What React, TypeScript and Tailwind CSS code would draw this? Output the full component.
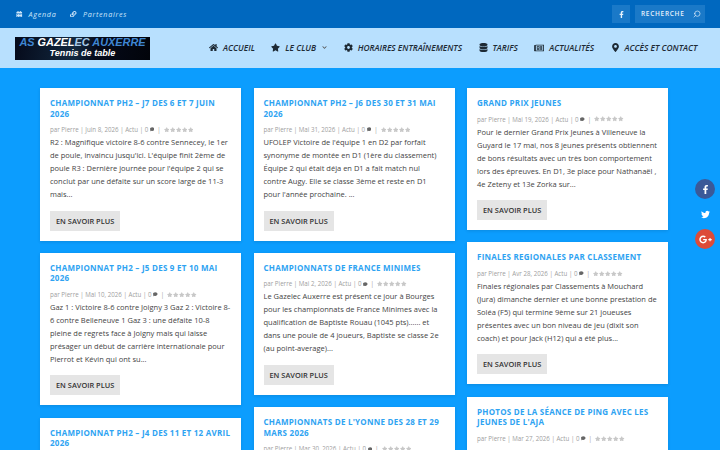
import { FaCalendarAlt, FaLink, FaFacebookF, FaHome, FaStar, FaCog, FaDatabase, FaRegNewspaper, FaMapMarkerAlt, FaComment, FaTwitter, FaGooglePlusG, FaChevronDown } from 'react-icons/fa';
import { FiSearch } from 'react-icons/fi';

type Post = {
  title: string;
  date?: string;
  text?: string;
};

const columns: Post[][] = [
  [
    {
      title: 'Championnat PH2 – J7 des 6 et 7 juin 2026',
      date: 'Juin 8, 2026',
      text: "R2 : Magnifique victoire 8-6 contre Sennecey, le 1er de poule, invaincu jusqu'ici. L'équipe finit 2ème de poule R3 : Dernière journée pour l'équipe 2 qui se conclut par une défaite sur un score large de 11-3 mais...",
    },
    {
      title: 'Championnat PH2 – J5 des 9 et 10 mai 2026',
      date: 'Mai 10, 2026',
      text: 'Gaz 1 : Victoire 8-6 contre Joigny 3 Gaz 2 : Victoire 8-6 contre Belleneuve 1 Gaz 3 : une défaite 10-8 pleine de regrets face à Joigny mais qui laisse présager un début de carrière internationale pour Pierrot et Kévin qui ont su...',
    },
    { title: 'Championnat PH2 – J4 des 11 et 12 avril 2026' },
  ],
  [
    {
      title: 'Championnat PH2 – J6 des 30 et 31 mai 2026',
      date: 'Mai 31, 2026',
      text: "UFOLEP Victoire de l'équipe 1 en D2 par forfait synonyme de montée en D1 (1ère du classement) Équipe 2 qui était déja en D1 a fait match nul contre Augy. Elle se classe 3ème et reste en D1 pour l'année prochaine.  ...",
    },
    {
      title: 'Championnats de France Minimes',
      date: 'Mai 2, 2026',
      text: 'Le Gazelec Auxerre est présent ce jour à Bourges pour les championnats de France Minimes avec la qualification de Baptiste Rouau (1045 pts)...... et dans une poule de 4 joueurs, Baptiste se classe 2e (au point-average)...',
    },
    { title: "Championnats de l'Yonne des 28 et 29 mars 2026", date: 'Mar 30, 2026' },
  ],
  [
    {
      title: 'Grand Prix Jeunes',
      date: 'Mai 19, 2026',
      text: 'Pour le dernier Grand Prix Jeunes à Villeneuve la Guyard le 17 mai, nos 8 jeunes présents obtiennent de bons résultats avec un très bon comportement lors des épreuves. En D1, 3e place pour Nathanaël , 4e Zeteny et 13e Zorka sur...',
    },
    {
      title: 'Finales Regionales par classement',
      date: 'Avr 28, 2026',
      text: 'Finales régionales par Classements à Mouchard (Jura) dimanche dernier et une bonne prestation de Soléa (F5) qui termine 9ème sur 21 joueuses présentes avec un bon niveau de jeu (dixit son coach) et pour Jack (H12) qui a été plus...',
    },
    { title: "Photos de la séance de ping avec les jeunes de l'AJA", date: 'Mar 27, 2026' },
  ],
];

const menu = [
  { label: 'Accueil', icon: <FaHome className="text-[9px]" /> },
  { label: 'Le club', icon: <FaStar className="text-[9px]" />, caret: true },
  { label: 'Horaires entraînements', icon: <FaCog className="text-[9px]" /> },
  { label: 'Tarifs', icon: <FaDatabase className="text-[9px]" /> },
  { label: 'Actualités', icon: <FaRegNewspaper className="text-[10px]" /> },
  { label: 'Accès et contact', icon: <FaMapMarkerAlt className="text-[9px]" /> },
];

function Card({ post }: { post: Post }) {
  return (
    <article className="bg-white p-[10px] shadow-[0_1px_3px_rgba(0,0,0,0.12)]">
      <h2 className="text-[8px] leading-[10.5px] font-bold tracking-[0.25px] text-[#2ea3f2] uppercase">{post.title}</h2>
      {post.date && (
        <div className="mt-[6px] flex items-center gap-[1.5px] text-[6.2px] leading-[9px] whitespace-nowrap text-[#a0a0a0]">
          <span>par Pierre | {post.date} | Actu | 0</span>
          <FaComment className="text-[4.5px] text-[#666]" />
          <span>&nbsp;|&nbsp;</span>
          <span className="flex gap-[0.5px] text-[#c8c8c8]">
            {[0, 1, 2, 3, 4].map((i) => (
              <FaStar key={i} className="text-[5.5px]" />
            ))}
          </span>
        </div>
      )}
      {post.text && (
        <>
          <p className="mt-[2px] text-[7.5px] leading-[13px] text-[#444]">{post.text}</p>
          <a className="mt-[9.5px] inline-block bg-[#e5e5e5] px-[6px] py-[5px] text-[7.4px] leading-[10px] font-semibold text-[#333] uppercase">
            En savoir plus
          </a>
        </>
      )}
    </article>
  );
}

export default function App() {
  return (
    <div className="relative h-[450px] w-[720px] overflow-hidden bg-[#0c9dfe] font-['Open_Sans',sans-serif]">
      <div className="flex h-[28px] items-center justify-between bg-[#0068bf] pr-[15px] pl-[16px]">
        <div className="flex items-center gap-[14px] text-[7.2px] tracking-[0.7px] text-[#cfe6fa] italic">
          <span className="flex items-center gap-[6px]">
            <FaCalendarAlt className="text-[6.5px]" /> Agenda
          </span>
          <span className="flex items-center gap-[6px]">
            <FaLink className="text-[6.5px]" /> Partenaires
          </span>
        </div>
        <div className="flex items-center gap-[5px]">
          <span className="flex h-[18px] w-[18px] items-center justify-center bg-[#1a79c8] text-[7px] text-[#e6f2fc]">
            <FaFacebookF />
          </span>
          <span className="flex h-[18px] w-[70px] items-center justify-between bg-[#1a79c8] pr-[4px] pl-[6px] text-[6.5px] font-semibold tracking-[0.7px] text-[#e6f2fc]">
            RECHERCHE <FiSearch className="-scale-x-100 text-[8px]" />
          </span>
        </div>
      </div>

      <header className="flex h-[40px] items-center bg-[#b8e0fe] pl-[15px]">
        <div className="flex h-[23px] w-[135px] shrink-0 flex-col items-center justify-center bg-[linear-gradient(100deg,#050a1a,#12283f_45%,#050a1a_60%,#02040a)] font-['Liberation_Sans',sans-serif] leading-none font-bold italic">
          <span className="text-[10.9px] leading-[11px] whitespace-nowrap text-[#3f86d2]">
            AS <span className="text-white">GAZEL</span><span className="text-[#a9cbe8]">EC</span> AUXERRE
          </span>
          <span className="text-[9.1px] leading-[11px] text-white">Tennis de table</span>
        </div>
        <nav className="ml-[59px] flex items-center gap-[16.5px] text-[8.4px] font-semibold whitespace-nowrap text-[#1d2a35] uppercase italic">
          {menu.map((item) => (
            <span key={item.label} className="flex items-center gap-[5px]">
              {item.icon}
              {item.label}
              {item.caret && <FaChevronDown className="ml-[1px] text-[5px] text-[#555]" />}
            </span>
          ))}
        </nav>
      </header>

      <main className="flex items-start gap-[12.5px] pt-[20px] pl-[40px]">
        {columns.map((posts, i) => (
          <div key={i} className="flex w-[201px] flex-col gap-[12.4px]">
            {posts.map((post) => (
              <Card key={post.title} post={post} />
            ))}
          </div>
        ))}
      </main>

      <div className="absolute top-[179px] right-[5px] flex flex-col items-center gap-[5px]">
        <span className="flex h-[20px] w-[20px] items-center justify-center rounded-full bg-[#3b5998] text-[9px] text-white">
          <FaFacebookF />
        </span>
        <span className="flex h-[20px] w-[20px] items-center justify-center rounded-full text-[9px] text-white">
          <FaTwitter />
        </span>
        <span className="flex h-[20px] w-[20px] items-center justify-center rounded-full bg-[#dd4b39] text-[13px] text-white">
          <FaGooglePlusG />
        </span>
      </div>
    </div>
  );
}
